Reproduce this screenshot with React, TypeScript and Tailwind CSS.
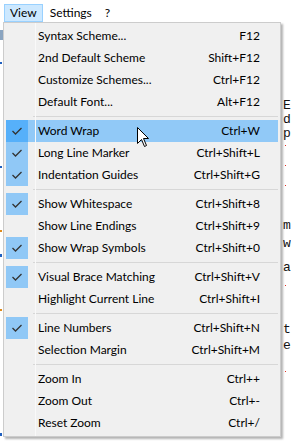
import React from "react";

type Item = { label: string; keys: string; checked?: boolean; active?: boolean };

const groups: Item[][] = [
  [
    { label: "Syntax Scheme...", keys: "F12" },
    { label: "2nd Default Scheme", keys: "Shift+F12" },
    { label: "Customize Schemes...", keys: "Ctrl+F12" },
    { label: "Default Font...", keys: "Alt+F12" },
  ],
  [
    { label: "Word Wrap", keys: "Ctrl+W", checked: true, active: true },
    { label: "Long Line Marker", keys: "Ctrl+Shift+L", checked: true },
    { label: "Indentation Guides", keys: "Ctrl+Shift+G", checked: true },
  ],
  [
    { label: "Show Whitespace", keys: "Ctrl+Shift+8", checked: true },
    { label: "Show Line Endings", keys: "Ctrl+Shift+9" },
    { label: "Show Wrap Symbols", keys: "Ctrl+Shift+0", checked: true },
  ],
  [
    { label: "Visual Brace Matching", keys: "Ctrl+Shift+V", checked: true },
    { label: "Highlight Current Line", keys: "Ctrl+Shift+I" },
  ],
  [
    { label: "Line Numbers", keys: "Ctrl+Shift+N", checked: true },
    { label: "Selection Margin", keys: "Ctrl+Shift+M" },
  ],
  [
    { label: "Zoom In", keys: "Ctrl++" },
    { label: "Zoom Out", keys: "Ctrl+-" },
    { label: "Reset Zoom", keys: "Ctrl+/" },
  ],
];

function Check() {
  return (
    <svg width="22" height="22" viewBox="0 0 22 22">
      <polyline points="6.5,11 9.5,14 15.5,8" fill="none" stroke="#333" strokeWidth="1.3" />
    </svg>
  );
}

function Row({ item }: { item: Item }) {
  return (
    <div className={`flex h-[22px] items-center ${item.active ? "bg-[#91c9f7]" : ""}`}>
      <div
        className={`w-[22px] h-[22px] shrink-0 ${
          item.checked ? (item.active ? "bg-[#56b0fa]" : "bg-[#90c8f6]") : ""
        }`}
      >
        {item.checked && <Check />}
      </div>
      <span className="ml-[10px] flex-1">{item.label}</span>
      <span className="mr-[18px]">{item.keys}</span>
    </div>
  );
}

// editor text peeking out to the right of the menu (height of each wrapped line, char)
const lines: { h: string; t?: string; dot?: boolean }[] = [
  { h: "h-[77px]" },
  { h: "h-[14px]", t: "E" },
  { h: "h-[14px]", t: "d" },
  { h: "h-[16px]", t: "p" },
  { h: "h-[20px]", dot: true },
  { h: "h-[20px]", dot: true },
  { h: "h-[36px]", dot: true },
  { h: "h-[18px]", t: "m" },
  { h: "h-[24px]", t: "w" },
  { h: "h-[22px]", t: "a" },
  { h: "h-[40px]", dot: true },
  { h: "h-[16px]", t: "t" },
  { h: "h-[30px]", t: "e" },
  { h: "h-[20px]", dot: true },
];

export default function App() {
  return (
    <div className="relative flex flex-col w-[291px] h-[446px] overflow-hidden bg-white text-[12px] text-black font-['Segoe_UI','Lato',sans-serif]">
      <div className="flex h-[22px] shrink-0 items-center pt-[3px]">
        <div className="ml-[4px] h-[18px] px-[5px] flex items-center border border-[#99d1ff] bg-[#cce8ff]">View</div>
        <div className="ml-[7px]">Settings</div>
        <div className="ml-[13px]">?</div>
      </div>

      <div className="flex flex-1">
        <div className="flex flex-col w-[3px] gap-[22px] pt-[8px]">
          <div className="h-[10px] bg-[#8aa4c0]" />
          <div className="h-[2px] w-[2px] bg-[#1f5fbf]" />
          <div className="h-[2px] w-[2px] bg-[#1f5fbf] mt-[80px]" />
          <div className="h-[2px] w-[2px] bg-[#e08a1a] mt-[40px]" />
          <div className="h-[3px] w-[2px] bg-[#1f5fbf]" />
          <div className="h-[2px] w-[2px] bg-[#e08a1a] mt-[30px]" />
          <div className="h-[3px] w-[2px] bg-[#1f5fbf] mt-[100px]" />
        </div>
        <div className="flex-1" />
        <div className="flex flex-col w-[8px] font-['Liberation_Mono',monospace] text-[13px] leading-[13px] text-[#111]">
          {lines.map((l, i) => (
            <div key={i} className={`${l.h} flex items-start`}>
              {l.t}
              {l.dot && <div className="ml-[2px] mt-[2px] w-px h-px bg-[#e03020]" />}
            </div>
          ))}
        </div>
      </div>

      <div className="absolute left-[3px] top-[22px] w-[278px] border border-[#cccccc] bg-[#f0f0f0] px-[2px] py-[2px] shadow-[2px_2px_2px_rgba(0,0,0,0.3)]">
        <div className="absolute left-[31px] top-0 bottom-0 w-px bg-[#f9f9f9]" />
        {groups.map((g, gi) => (
          <div key={gi}>
            {gi > 0 && (
              <div className="h-[7px] flex items-center pl-[27px]">
                <div className="h-px w-full bg-[#d7d7d7]" />
              </div>
            )}
            {g.map((it) => (
              <Row key={it.label} item={it} />
            ))}
          </div>
        ))}
      </div>

      <svg className="absolute left-[137px] top-[127px]" width="13" height="21" viewBox="0 0 13 21">
        <path d="M0.5 0.5 L0.5 16.5 L4.5 12.5 L7.5 19.5 L9.5 18.5 L6.5 11.5 L11.5 11.5 Z" fill="#fff" stroke="#000" strokeWidth="1" />
      </svg>
    </div>
  );
}
